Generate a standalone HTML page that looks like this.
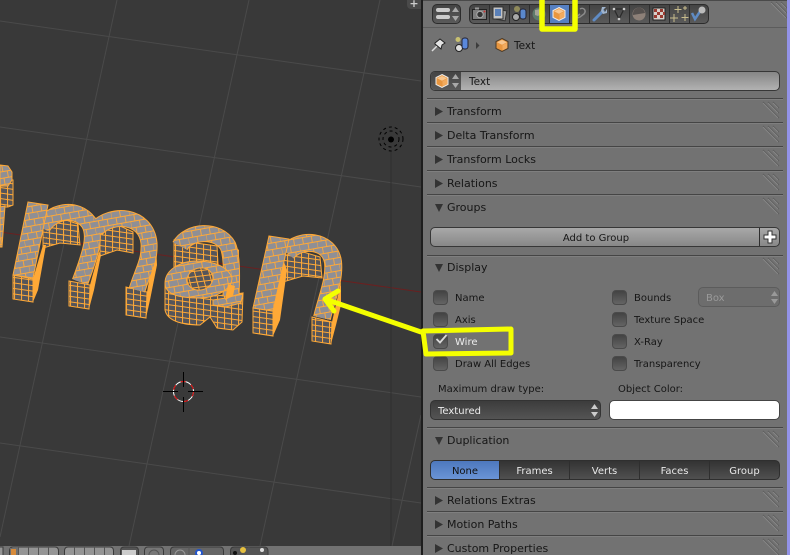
<!DOCTYPE html>
<html><head><meta charset="utf-8">
<style>
html,body{margin:0;padding:0;background:#393939}
#r{position:relative;width:790px;height:555px;overflow:hidden;background:#393939;font-family:"DejaVu Sans",sans-serif;font-size:10px;color:#161616}
.a{position:absolute}
.t{position:absolute;white-space:nowrap;line-height:14px;height:14px}
.h{font-size:11px}
.w{color:#ececec}
.sep{position:absolute;left:427px;width:356px;height:1px;background:#454545;box-shadow:0 1px 0 #7f7f7f}
.cb{position:absolute;width:13px;height:13px;border:1px solid #4a4a4a;border-radius:4px;background:linear-gradient(#434343,#646464)}
.btn{position:absolute;box-sizing:border-box;border:1px solid #373737;border-radius:5px}
.seg{position:absolute;top:460px;height:20px;box-sizing:border-box;border:1px solid #2f2f2f;background:linear-gradient(#333,#505050);color:#e8e8e8;text-align:center;line-height:22px;overflow:hidden}
</style></head><body>
<div id="r">
<svg class="a" style="left:0;top:0" width="421" height="555" viewBox="0 0 421 555">
<defs>
<pattern id="brick" width="18" height="13" patternUnits="userSpaceOnUse" patternTransform="rotate(-10)">
<rect width="18" height="13" fill="#8f8f95"/>
<path d="M0 .5H18M0 7H18M4.500 0V6.500M13.500 0V6.500M0 7V13M9 7V13" stroke="#ffa937" stroke-width=".9" fill="none"/>
</pattern>
<pattern id="grid" width="7" height="5.500" patternUnits="userSpaceOnUse" patternTransform="skewY(8)">
<rect width="7" height="5.500" fill="#55555a"/>
<path d="M0 .5H7M.5 0V5.500" stroke="#ffa937" stroke-width="1" fill="none"/>
</pattern>
</defs>
<g stroke="#4a4a4a" stroke-width="1" fill="none">
<path d="M0 21 421 81M0 127 421 187M0 337 421 397M0 443 421 503"/>
<path d="M117 0 43 340 0 537M249 0 129 546M380 0 260 546M421 415 392 546"/>
</g>
<path d="M0 232 421 292" stroke="#6a2020" stroke-width="1"/>
<path d="M391 152V546" stroke="#303030"/>
<g fill="none" stroke="#000">
<circle cx="391" cy="139" r="12" stroke-dasharray="3 3"/>
<circle cx="391" cy="139" r="8" stroke-dasharray="3 3"/>
</g>
<circle cx="391" cy="139.500" r="3" fill="#000"/>
<!-- 3D cursor -->
<circle cx="183.500" cy="391.500" r="10" fill="none" stroke="#fff" stroke-width="1"/>
<circle cx="183.500" cy="391.500" r="10" fill="none" stroke="#d00" stroke-width="1" stroke-dasharray="5 6"/>
<path d="M183.500 372V387M183.500 397V412M163 391.500H178M188 391.500H203" stroke="#000"/>

<!-- left fragment -->
<path d="M0 180H13V205L8 207H0Z" fill="url(#grid)" stroke="#ffa937"/>
<path d="M0 165 8 166 12 172 12 180 8 186H0Z" fill="url(#brick)" stroke="#ffa937"/>
<path d="M0 207 5 206 2 247H0Z" fill="url(#brick)" stroke="#ffa937"/>

<!-- m extrusion -->
<g stroke="#ffa937" stroke-width="1">
<path d="M13 275 33 279 33 302 13 299Z" fill="url(#grid)"/>
<path d="M69 281 90 285 89 309 69 306Z" fill="url(#grid)"/>
<path d="M126 287 147 292 146 318 126 315Z" fill="url(#grid)"/>
<path d="M43 222 60 218 78 224 80 245 60 243 43 248Z" fill="url(#grid)"/>
<path d="M100 228 118 225 133 232 133 253 117 250 100 256Z" fill="url(#grid)"/>
</g>
<path d="M33 279 43 245 46 245 38 290 33 302Z" fill="#ffa937"/>
<path d="M90 285 99 252 101 255 94 290 89 309Z" fill="#ffa937"/>
<path d="M147 292 156 243 157 265 150 300 146 318Z" fill="#ffa937"/>
<!-- m top -->
<g fill="none" stroke-linecap="butt">
<g stroke="#ffa937" stroke-width="17">
<path d="M42 228C50 212 76 205 89 223C96 235 92 250 80 282"/>
<path d="M96 229C112 212 146 215 149 243C150 262 143 270 137 290"/>
</g>
<g stroke="url(#brick)" stroke-width="15">
<path d="M42 228C50 212 76 205 89 223C96 235 92 250 80 282"/>
<path d="M96 229C112 212 146 215 149 243C150 262 143 270 137 290"/>
</g>
</g>
<path d="M28 202 48 205 33 278 13 275Z" fill="url(#brick)" stroke="#ffa937"/>

<!-- a -->
<g stroke="#ffa937">
<path d="M165 283V310C167 320 180 325 200 325L210 317 217 328 233 330 242 322 243 293 215 296Z" fill="url(#grid)"/>
<path d="M174 240 217 246 218 264 190 268 174 270Z" fill="url(#grid)"/>
</g>
<path d="M233 245 239 250 238 296 228 302Z" fill="#ffa937"/>
<g fill="none">
<path d="M180 246C188 231 218 228 228 246C232 256 232 275 231 296" stroke="#ffa937" stroke-width="17"/>
<path d="M180 246C188 231 218 228 228 246C232 256 232 275 231 296" stroke="url(#brick)" stroke-width="15"/>
</g>
<path d="M165 283C165 270 180 261 197 261C212 261 228 266 232 278C232 290 215 298 200 298C180 298 165 295 165 283Z" fill="url(#brick)" stroke="#ffa937"/>
<ellipse cx="200" cy="279" rx="13" ry="11" fill="url(#grid)" stroke="#ffa937" transform="rotate(-15 200 279)"/>
<path d="M213 300 226 298 243 293 241 303 226 307 213 305Z" fill="url(#brick)" stroke="#ffa937"/>
<path d="M228 284 235 286 233 296 225 300Z" fill="#ffa937"/>

<!-- n -->
<g stroke="#ffa937">
<path d="M253 308 273 311 273 336 253 333Z" fill="url(#grid)"/>
<path d="M312 317 332 322 331 344 312 341Z" fill="url(#grid)"/>
<path d="M283 256 300 251 320 257 322 278 303 276 283 282Z" fill="url(#grid)"/>
</g>
<path d="M273 311 284 262 287 270 280 320 273 336Z" fill="#ffa937"/>
<path d="M332 322 341 282 341 305 336 325 331 344Z" fill="#ffa937"/>
<g fill="none">
<path d="M287 253C300 237 330 240 333 262C335 280 326 300 322 318" stroke="#ffa937" stroke-width="18"/>
<path d="M287 253C300 237 330 240 333 262C335 280 326 300 322 318" stroke="url(#brick)" stroke-width="16"/>
</g>
<path d="M269 236 289 239 273 311 253 308Z" fill="url(#brick)" stroke="#ffa937"/>
</svg>

<!-- panel -->
<div class="a" style="left:421px;top:0;width:2px;height:555px;background:#1e1e1e"></div>
<div class="a" style="left:423px;top:0;width:364px;height:555px;background:#727272"></div>
<div class="a" style="left:423px;top:0;width:364px;height:1px;background:#4a4a4a"></div>
<div class="a" style="left:423px;top:27px;width:364px;height:1px;background:#5c5c5c"></div>
<div class="a" style="left:787px;top:0;width:3px;height:555px;background:#9393e8"></div>
<div class="a" style="left:407px;top:0;width:14px;height:9px;background:#4a4a4a;border-radius:0 0 0 4px;color:#ccc;font:bold 11px/8px 'DejaVu Sans',sans-serif;text-align:center">+</div>

<!-- header widgets -->
<div class="btn" style="left:432px;top:4px;width:29px;height:20px;background:linear-gradient(#444,#5a5a5a);border-color:#2c2c2c"></div>
<div class="a" style="left:436px;top:8px;width:14px;height:4px;background:#ccc;border-radius:2px"></div>
<div class="a" style="left:436px;top:15px;width:14px;height:4px;background:#ccc;border-radius:2px"></div>
<svg class="a" style="left:452px;top:7px" width="7" height="14"><path d="M3.500 0 7 5H0ZM3.500 14 0 9H7Z" fill="#a8a8a8"/></svg>

<div class="btn" style="left:469px;top:4px;width:240px;height:20px;background:linear-gradient(#444,#5a5a5a);border-color:#2c2c2c"></div>
<div class="a" style="left:549px;top:5px;width:20px;height:18px;background:#5680c2"></div>
<svg class="a" style="left:469px;top:4px" width="240" height="20" viewBox="0 0 240 20">
<path d="M20.500 1V19M40.500 1V19M60.500 1V19M80.500 1V19M100.500 1V19M120.500 1V19M140.500 1V19M160.500 1V19M180.500 1V19M200.500 1V19M220.500 1V19" stroke="#2e2e2e"/>
<!-- camera -->
<rect x="3.500" y="5.500" width="14" height="10" fill="#7d7d7d" stroke="#222"/><rect x="6" y="3.500" width="4" height="2" fill="#999"/><circle cx="11" cy="10.500" r="3.200" fill="#333" stroke="#aaa"/><circle cx="15.500" cy="7.500" r="1" fill="#c33"/>
<!-- layers -->
<rect x="28" y="6" width="9" height="10" fill="#999" stroke="#333" transform="rotate(10 32 11)"/><rect x="24" y="3" width="10" height="12" fill="#c4c4c4" stroke="#333"/><rect x="26" y="5" width="6" height="7" fill="#5a80b8"/>
<!-- scene -->
<circle cx="48" cy="5" r="3" fill="#8f8a5a"/><circle cx="47" cy="13" r="3.500" fill="#a8a8a8" stroke="#222"/><rect x="51" y="5" width="6" height="10" rx="2.500" fill="#5a88cc" stroke="#223"/>
<!-- world -->
<circle cx="70" cy="10" r="6.500" fill="#5f7a6c"/><path d="M66 6 72 5 74 9 69 12 66 11Z" fill="#a4a498"/>
<!-- object -->
<g transform="translate(83,3)"><path d="M7 .5 13 3.500V10.500L7 13.500 1 10.500V3.500Z" fill="#e8963f" stroke="#eee" stroke-width="1"/><path d="M7 2 12 4.300 7 6.700 2 4.300Z" fill="#f7c68f"/><path d="M7.500 7 12.300 4.800V10L7.500 12.500Z" fill="#f3ab5e"/></g>
<!-- constraints -->
<path d="M105 15 111 10M111 5C114 3 118 6 115 10L111 13C107 15 104 12 106 9" stroke="#8a8a8a" fill="none" stroke-width="1.500"/>
<!-- wrench -->
<path d="M125 16 134 7" stroke="#5f8bc4" stroke-width="3" stroke-linecap="round"/><path d="M133 3 137 3 134 6 136 8 138 5 138 9 134 10 132 7Z" fill="#a0b4cc"/>
<!-- data -->
<path d="M145 5 155 5 150 15Z" fill="none" stroke="#2a2a2a" stroke-width="1.200"/><circle cx="145" cy="5" r="1.300" fill="#ccc"/><circle cx="155" cy="5" r="1.300" fill="#ccc"/><circle cx="150" cy="15" r="1.300" fill="#ccc"/>
<!-- material -->
<circle cx="170" cy="10" r="6.500" fill="#8d8078"/><path d="M170 3.500A6.500 6.500 0 0 0 164 11L176 9A6.500 6.500 0 0 0 170 3.500Z" fill="#55504e"/>
<!-- texture -->
<rect x="184" y="4" width="12" height="12" fill="#d8d0ca" stroke="#222"/><path d="M185 5h3v3h-3zM191 5h3v3h-3zM188 8h3v3h-3zM194 8h2v3h-2zM185 11h3v3h-3zM191 11h3v3h-3z" fill="#9a3a30"/>
<!-- particles -->
<path d="M209 2V9M205.500 5.500H212.500M205 10V18M201 14H209M216 10V17M212.500 13.500H219.500M216 2V6M214 4H218" stroke="#c8bc8c" stroke-width="1"/>
<!-- physics -->
<path d="M223 9 226 15 232 6" stroke="#5f8bc4" stroke-width="2.500" fill="none"/><circle cx="233" cy="6" r="3.500" fill="#bbb"/>
</svg>

<!-- yellow top box -->
<svg class="a" style="left:530px;top:0" width="60" height="40"><path d="M12 -4V29H45V-4" fill="none" stroke="#f4ff00" stroke-width="5.500" stroke-linejoin="round"/></svg>

<!-- breadcrumb -->
<svg class="a" style="left:430px;top:36px" width="80" height="18" viewBox="0 0 80 18">
<path d="M2 15 7 10" stroke="#ddd" stroke-width="1.500"/><path d="M5 7 10 3 15 7 12 9 11 13 5 8Z" fill="#e4e4e4" stroke="#222" stroke-width="1"/>
<circle cx="28" cy="3.500" r="2.500" fill="#c8c070"/><circle cx="29" cy="12" r="3.500" fill="#ddd" stroke="#222"/><rect x="32" y="2" width="6" height="11" rx="2.500" fill="#5a88dd" stroke="#223"/>
<path d="M46 6 49.500 9.500 46 13Z" fill="#3c3c3c"/>
<g transform="translate(65,2)"><path d="M7 .5 13 3.500V10.500L7 13.500 1 10.500V3.500Z" fill="#e8963f" stroke="#4a3a28"/><path d="M7 2 12 4.300 7 6.700 2 4.300Z" fill="#f7c68f"/><path d="M7.500 7 12.300 4.800V10L7.500 12.500Z" fill="#f3ab5e"/></g>
</svg>
<div class="t" style="left:514px;top:39px;font-size:10.500px">Text</div>

<!-- Name field -->
<div class="btn" style="left:430px;top:71px;width:350px;height:20px;background:linear-gradient(#868686,#b2b2b2)"></div>
<div class="a" style="left:431px;top:72px;width:30px;height:18px;background:linear-gradient(#444,#5a5a5a);border-radius:4px 0 0 4px"></div>
<svg class="a" style="left:434px;top:73px" width="26" height="16" viewBox="0 0 26 16">
<g transform="translate(1,1)"><path d="M7 .5 13 3.500V10.500L7 13.500 1 10.500V3.500Z" fill="#e8963f" stroke="#eee"/><path d="M7 2 12 4.300 7 6.700 2 4.300Z" fill="#f7c68f"/><path d="M7.500 7 12.300 4.800V10L7.500 12.500Z" fill="#f3ab5e"/></g>
<path d="M21.500 1 25 6H18ZM21.500 15 18 10H25Z" fill="#a8a8a8"/>
</svg>
<div class="t" style="left:469px;top:75px;font-size:10.500px">Text</div>

<!-- grips -->
<svg class="a" style="left:423px;top:0" width="364" height="555" viewBox="423 0 364 555">
<defs><g id="gr"><path d="M0 0 16 16M5 0 16 11M10 0 16 6" stroke="#5a5a5a"/><path d="M0 1 15 16M5 1 15 11M10 1 15 6" stroke="#868686"/></g></defs>
<use href="#gr" x="763" y="102"/><use href="#gr" x="763" y="126"/><use href="#gr" x="763" y="150"/><use href="#gr" x="763" y="174"/><use href="#gr" x="763" y="198"/><use href="#gr" x="763" y="258"/><use href="#gr" x="763" y="431"/><use href="#gr" x="763" y="491"/><use href="#gr" x="763" y="515"/><use href="#gr" x="763" y="539"/>
<use href="#gr" x="771" y="2"/>
<g fill="#333">
<path d="M435 107 443 111.500 435 116ZM435 131 443 135.500 435 140ZM435 155 443 159.500 435 164ZM435 179 443 183.500 435 188ZM435 496 443 500.500 435 505ZM435 520 443 524.500 435 529ZM435 544 443 548.500 435 553Z"/>
<path d="M435 204 443 204 439 212ZM435 264 443 264 439 272ZM435 437 443 437 439 445Z"/>
</g>
</svg>

<!-- separators -->
<div class="sep" style="top:98px"></div><div class="sep" style="top:122px"></div><div class="sep" style="top:146px"></div><div class="sep" style="top:170px"></div><div class="sep" style="top:194px"></div><div class="sep" style="top:255px"></div><div class="sep" style="top:427px"></div><div class="sep" style="top:487px"></div><div class="sep" style="top:511px"></div><div class="sep" style="top:535px"></div>

<div class="t h" style="left:447px;top:105px">Transform</div>
<div class="t h" style="left:447px;top:129px">Delta Transform</div>
<div class="t h" style="left:447px;top:153px">Transform Locks</div>
<div class="t h" style="left:447px;top:177px">Relations</div>
<div class="t h" style="left:447px;top:201px">Groups</div>
<div class="t h" style="left:447px;top:261px">Display</div>
<div class="t h" style="left:447px;top:434px">Duplication</div>
<div class="t h" style="left:447px;top:494px">Relations Extras</div>
<div class="t h" style="left:447px;top:518px">Motion Paths</div>
<div class="t h" style="left:447px;top:542px">Custom Properties</div>

<!-- Add to group -->
<div class="btn" style="left:430px;top:227px;width:350px;height:20px;background:linear-gradient(#a8a8a8,#888)"></div>
<div class="a" style="left:759px;top:228px;width:1px;height:18px;background:#2e2e2e"></div>
<div class="t" style="left:430px;top:232px;width:332px;text-align:center">Add to Group</div>
<svg class="a" style="left:763px;top:230px" width="14" height="14"><path d="M5 1H9V5H13V9H9V13H5V9H1V5H5Z" fill="#fff" stroke="#333"/></svg>

<!-- checkboxes -->
<div class="cb" style="left:433px;top:290px"></div><div class="t" style="left:455px;top:292px">Name</div>
<div class="cb" style="left:433px;top:312px"></div><div class="t" style="left:455px;top:314px">Axis</div>
<div class="cb" style="left:433px;top:334px"></div><div class="t w" style="left:455px;top:336px">Wire</div>
<svg class="a" style="left:434px;top:332px" width="15" height="14"><path d="M2.500 7 6 10.500 12.500 3" fill="none" stroke="#d8d8d8" stroke-width="1.800"/></svg>
<div class="cb" style="left:433px;top:356px"></div><div class="t" style="left:455px;top:358px">Draw All Edges</div>
<div class="cb" style="left:612px;top:290px"></div><div class="t" style="left:634px;top:292px">Bounds</div>
<div class="cb" style="left:612px;top:312px"></div><div class="t" style="left:634px;top:314px">Texture Space</div>
<div class="cb" style="left:612px;top:334px"></div><div class="t" style="left:634px;top:336px">X-Ray</div>
<div class="cb" style="left:612px;top:356px"></div><div class="t" style="left:634px;top:358px">Transparency</div>
<div class="btn" style="left:698px;top:287px;width:82px;height:20px;background:#6d6d6d;border-color:#5c5c5c"></div>
<div class="t" style="left:706px;top:292px;color:#9a9a9a">Box</div>
<svg class="a" style="left:771px;top:291px" width="7" height="13"><path d="M3.500 0 7 5H0ZM3.500 13 0 8H7Z" fill="#999"/></svg>

<div class="t" style="left:438px;top:383px">Maximum draw type:</div>
<div class="t" style="left:618px;top:383px">Object Color:</div>
<div class="btn" style="left:430px;top:400px;width:171px;height:20px;background:linear-gradient(#3c3c3c,#545454);border-color:#333"></div>
<div class="t w" style="left:438px;top:405px">Textured</div>
<svg class="a" style="left:591px;top:404px" width="7" height="13"><path d="M3.500 0 7 5H0ZM3.500 13 0 8H7Z" fill="#ccc"/></svg>
<div class="btn" style="left:609px;top:400px;width:171px;height:20px;background:#fff;border-color:#444"></div>

<!-- duplication -->
<div class="seg" style="left:430px;width:70px;border-radius:5px 0 0 5px;background:linear-gradient(#4d78bd,#6a94d6);color:#111">None</div>
<div class="seg" style="left:499px;width:71px">Frames</div>
<div class="seg" style="left:569px;width:71px">Verts</div>
<div class="seg" style="left:639px;width:71px">Faces</div>
<div class="seg" style="left:709px;width:71px;border-radius:0 5px 5px 0">Group</div>

<!-- bottom bar -->
<div class="a" style="left:0;top:546px;width:421px;height:9px;background:#727272"></div>
<svg class="a" style="left:0;top:546px" width="421" height="9" viewBox="0 0 421 9">
<g fill="#959595" stroke="#3a3a3a">
<path d="M-4 10V5Q-4 1 0 1H3V10ZM9.500 10V5Q9.500 1 13 1H55Q58.500 1 58.500 5V10Z"/>
<path d="M64.500 10V5Q64.500 1 68 1H110Q113.500 1 113.500 5V10Z"/>
<path d="M120.500 10V5Q120.500 1 124 1H135Q138.500 1 138.500 5V10Z" fill="#555"/>
<path d="M144.500 10V5Q144.500 1 148 1H160Q163.500 1 163.500 5V10Z" fill="#777"/>
<path d="M170.500 10V5Q170.500 1 174 1H220Q223.500 1 223.500 5V10Z" fill="#666"/>
<path d="M230.500 10V5Q230.500 1 234 1H264Q268 1 268 5V10Z" fill="#555"/>
</g>
<path d="M18.500 1V9M28.500 1V9M38.500 1V9M48.500 1V9M74.500 1V9M84.500 1V9M94.500 1V9M104.500 1V9M189 1V9M249 1V9" stroke="#555"/>
<rect x="10" y="2" width="8" height="7" fill="#6f6f6f"/>
<rect x="11" y="3" width="5" height="6" fill="#d68a3a"/>
<rect x="122" y="4" width="14" height="5" fill="#ccc"/>
<circle cx="154" cy="9" r="5" fill="none" stroke="#555"/>
<circle cx="180" cy="9" r="5" fill="none" stroke="#999"/>
<circle cx="199" cy="7" r="3" fill="#fff" stroke="#2255cc" stroke-width="2"/>
<circle cx="243" cy="4" r="3" fill="#e6c040"/>
<circle cx="235" cy="7" r="2" fill="#111"/>
<circle cx="262" cy="4" r="2" fill="#ddd"/>
</svg>

<!-- yellow arrow and box -->
<svg class="a" style="left:300px;top:270px" width="230" height="100" viewBox="300 270 230 100">
<path d="M421 332 325 299M338 291 325 299 334 311" fill="none" stroke="#f4ff00" stroke-width="5" stroke-linecap="round" stroke-linejoin="round"/>
<path d="M423 331 511 329 511 353 426 354Z" fill="none" stroke="#f4ff00" stroke-width="5" stroke-linejoin="round"/>
</svg>
</div>
</body></html>
